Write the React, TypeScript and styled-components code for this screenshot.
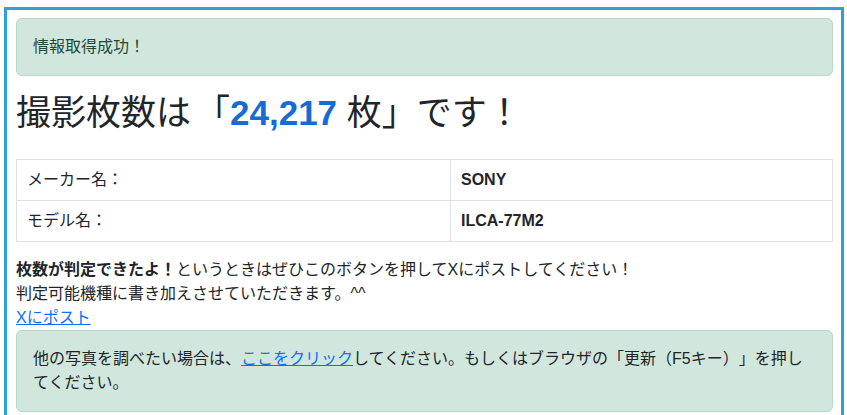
import React from "react";
import styled, { createGlobalStyle } from "styled-components";

const GlobalStyle = createGlobalStyle`
  html, body {
    margin: 0;
    padding: 0;
    background: #ffffff;
  }
  body {
    font-family: "Liberation Sans", "Noto Sans CJK JP", sans-serif;
    font-size: 16px;
    line-height: 24px;
    color: #212529;
    text-spacing-trim: space-all;
  }
`;

const Frame = styled.div`
  box-sizing: border-box;
  width: 840px;
  margin: 7px 0 0 4px;
  border: 3px solid #2ba3d9;
  padding: 8px 8px 16px 9px;
`;

const Alert = styled.div<{ $gap?: number; $tone?: string }>`
  background: #d1e7dd;
  border: 1px solid #b5d8c7;
  border-radius: 6px;
  padding: 16px;
  color: ${(p) => p.$tone ?? "#1f4a36"};
  margin-bottom: ${(p) => p.$gap ?? 0}px;
`;

const Title = styled.h1`
  margin: 0 0 25px;
  font-size: 35px;
  line-height: 42px;
  font-weight: 400;
  color: #212529;
`;

const Count = styled.span`
  font-family: "Liberation Sans", Arial, sans-serif;
  font-weight: 700;
  color: #166cd0;
`;

const Bracket = styled.span`
  margin-left: 4px;
`;

const InfoTable = styled.table`
  width: 100%;
  border-collapse: collapse;
  margin-bottom: 16px;
`;

const Cell = styled.td<{ $strong?: boolean }>`
  border: 1px solid #dee2e6;
  padding: 8px 10px;
  font-weight: ${(p) => (p.$strong ? 700 : 400)};
  ${(p) => (p.$strong ? "" : "width: 413px;")}
`;

const Notice = styled.p`
  margin: 0;
`;

const Link = styled.a`
  color: #0d6efd;
  text-decoration: underline;
`;

export default function App() {
  return (
    <>
      <GlobalStyle />
      <Frame>
        <Alert $gap={16}>情報取得成功！</Alert>
        <Title>
          撮影枚数は<Bracket>「</Bracket>
          <Count>24,217</Count> 枚」です！
        </Title>
        <InfoTable>
          <tbody>
            <tr>
              <Cell>メーカー名：</Cell>
              <Cell $strong>SONY</Cell>
            </tr>
            <tr>
              <Cell>モデル名：</Cell>
              <Cell $strong>ILCA-77M2</Cell>
            </tr>
          </tbody>
        </InfoTable>
        <Notice>
          <b>枚数が判定できたよ！</b>というときはぜひこのボタンを押してXにポストしてください！
          <br />
          判定可能機種に書き加えさせていただきます。^^
          <br />
          <Link href="#">Xにポスト</Link>
        </Notice>
        <Alert $tone="#212529">
          他の写真を調べたい場合は、<Link href="#">ここをクリック</Link>
          してください。もしくはブラウザの「更新（F5キー）」を押してください。
        </Alert>
      </Frame>
    </>
  );
}
